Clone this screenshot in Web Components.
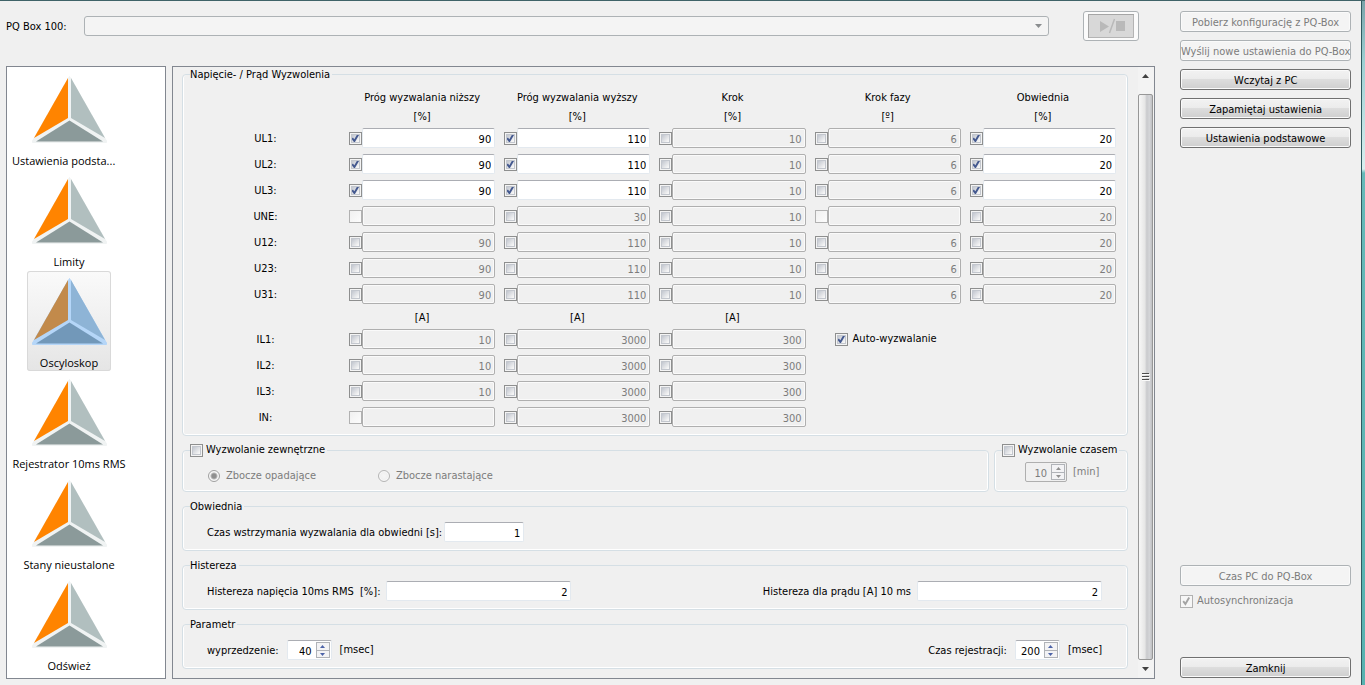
<!DOCTYPE html>
<html lang="pl">
<head>
<meta charset="utf-8">
<title>PQ Box 100</title>
<style>
  body { margin: 0; background: #f0f0f0; }
</style>
</head>
<body>
<pq-window>
  <pq-device-bar slot="top"></pq-device-bar>
  <pq-nav slot="nav"></pq-nav>
  <pq-scroll-view slot="view">
    <pq-group label="Napięcie- / Prąd Wyzwolenia" kind="grid"><pq-threshold-grid></pq-threshold-grid></pq-group>
    <pq-row>
      <pq-group label="Wyzwolanie zewnętrzne" kind="line" checkable class="grow"><pq-edge-choice></pq-edge-choice></pq-group>
      <pq-group label="Wyzwolanie czasem" kind="timer" checkable><pq-spin value="10" unit="[min]" compact disabled></pq-spin></pq-group>
    </pq-row>
    <pq-group label="Obwiednia" kind="form">
      <pq-field value="1" size="short">Czas wstrzymania wyzwalania dla obwiedni [s]:</pq-field>
    </pq-group>
    <pq-group label="Histereza" kind="form">
      <pq-field value="2">Histereza napięcia 10ms RMS &nbsp;[%]:</pq-field>
      <pq-field value="2">Histereza dla prądu [A] 10 ms</pq-field>
    </pq-group>
    <pq-group label="Parametr" kind="form">
      <pq-spin value="40" unit="[msec]">wyprzedzenie:</pq-spin>
      <pq-spin value="200" unit="[msec]">Czas rejestracji:</pq-spin>
    </pq-group>
  </pq-scroll-view>
  <pq-actions slot="side"></pq-actions>
</pq-window>

<script>
const svgUrl = s => `url("data:image/svg+xml,${encodeURIComponent(s)}")`;
const tick = c => svgUrl(`<svg xmlns="http://www.w3.org/2000/svg" width="11" height="11" viewBox="0 0 11 11"><path d="M2.2 5.2 4.4 8 8.2 1.6" fill="none" stroke="${c}" stroke-width="1.9"/></svg>`);
const comboArrow = svgUrl('<svg xmlns="http://www.w3.org/2000/svg" width="7" height="4" viewBox="0 0 7 4"><path d="M0 0h7L3.5 4z" fill="#8a8d8f"/></svg>');

const base = `
  :host { display: block; }
  * { box-sizing: border-box; }
  input, button, select { font: inherit; color: inherit; margin: 0; }
  :disabled, .off { color: #7c7c7c; }
  input[type=text] {
    appearance: none; height: 20px; min-width: 0; padding: 2px 3px 0; text-align: right;
    border: 1px solid #e3e9ef; border-top-color: #abadb3; border-radius: 2px; background: #fff; outline: 0;
  }
  input[type=text]:disabled { border-color: #afafaf; background: #f0f0f0; box-shadow: inset 0 0 0 1px #fafafa; }
  input[type=checkbox] {
    appearance: none; flex: none; width: 13px; height: 13px; border: 1px solid #8e8f8f;
    background: linear-gradient(135deg, #b9bec8, #f6f6f6 80%) content-box, #f6f6f6;
    padding: 1px; box-shadow: inset 0 0 0 1px #f4f4f4, inset 0 0 0 2px #c3c7ce;
  }
  input[type=checkbox]:checked {
    background: ${tick('#44598f')} center / 11px no-repeat border-box, linear-gradient(135deg, #b9bec8, #f6f6f6 80%) content-box, #f6f6f6;
  }
  input[type=checkbox]:disabled { border-color: #b1b1b1; background: linear-gradient(135deg, #f0f0f0, #fcfcfc); box-shadow: none; }
  input[type=checkbox]:disabled:checked { background: ${tick('#a3a3a3')} center / 11px no-repeat border-box, #f6f6f6; }
`;

function define(name, css, html) {
  customElements.define(name, class extends HTMLElement {
    constructor() {
      super();
      const t = document.createElement('template');
      t.innerHTML = `<style>${base}${css}</style>` + (typeof html === 'function' ? html(this) : html);
      this.attachShadow({ mode: 'open' }).append(t.content.cloneNode(true));
    }
  });
}

define('pq-window', `
  :host {
    display: grid; grid-template-columns: 160px minmax(0, 1fr) 171px; grid-template-rows: auto 1fr; column-gap: 6px;
    min-height: 100vh; padding: 10px 14px 6px 6px; box-sizing: border-box; position: relative;
    border-top: 1px solid #3f6368; background: #f0f0f0; color: #000;
    font: 11px/14px "DejaVu Sans Condensed", Tahoma, sans-serif;
  }
  .edge {
    position: absolute; top: 0; right: 0; bottom: 0; width: 4px; border-left: 1px solid #2f5a60;
    background: linear-gradient(#7aa3a9, #9ccfd2 60px, #d9efef 168px, #66b9b8 172px, #57b2b0);
  }
  .top { grid-column: 1 / 3; height: 55px; }
  .side { grid-column: 3; grid-row: 1 / 3; display: grid; }
  .view { margin-right: 19px; display: grid; }
  .nav { display: grid; }
`, `
  <header class="top"><slot name="top"></slot></header>
  <nav class="nav"><slot name="nav"></slot></nav>
  <main class="view"><slot name="view"></slot></main>
  <aside class="side"><slot name="side"></slot></aside>
  <div class="edge"></div>
`);

define('pq-device-bar', `
  :host { display: flex; align-items: center; height: 30px; padding-right: 35px; }
  label { width: 78px; padding-top: 2px; }
  select {
    appearance: none; flex: 1; height: 20px; border: 1px solid #adb2b5; border-radius: 3px; opacity: 1;
    background: ${comboArrow} right 6px center no-repeat, #f4f4f4; margin-right: 34px;
  }
  button {
    width: 56px; height: 30px; padding: 2px 4px; border: 1px solid #adb2b5; border-radius: 3px; background: #fbfbfb;
  }
  svg { display: block; }
`, `
  <label for="device">PQ Box 100:</label>
  <select id="device" disabled><option></option></select>
  <button disabled aria-label="Start / Stop">
    <svg width="46" height="24" viewBox="0 0 46 24">
      <path d="M0 0h46v24H0z" fill="#d8d8d8"/>
      <path d="M0 24V0h46" fill="none" stroke="#a5a5a5" stroke-width="2"/>
      <path d="M45.500 1v22.500H1" fill="none" stroke="#b4b4b4"/>
      <path d="M12 7l9 5.500-9 5.500zM28 7h9v10h-9z" fill="#b9b9b9"/>
      <path d="M26.500 5 21.500 19" stroke="#b9b9b9" stroke-width="1.500"/>
    </svg>
  </button>
`);

const logo = (l, r, b, edge) => `
  <svg width="84" height="84" viewBox="0 0 84 84" aria-hidden="true">
    <path d="M42.500 7.500 79.500 72v1.500h-74V72z" fill="${edge}" stroke="${edge}" stroke-linejoin="round"/>
    <path d="M41 9v40L7 69z" fill="${l}"/><path d="M44 9v40l34 20z" fill="${r}"/><path d="M42.500 51.500 76 72.500H9z" fill="${b}"/>
  </svg>`;
const plainLogo = logo('#ff8400', '#b1bfbf', '#8b9a9a', '#f0f3f3');
const selectedLogo = logo('#c28a4b', '#8eb4d6', '#7298b9', '#b5d6f8');

define('pq-nav', `
  :host { padding: 2px 34px 0 0; border: 1px solid #828790; background: #fff; font: 11px/16px "Open Sans", "Noto Sans", sans-serif; }
  ul { display: flex; flex-direction: column; align-items: center; gap: 1px; margin: 0; padding: 0; list-style: none; }
  button {
    display: flex; flex-direction: column; align-items: center; min-width: 84px; height: 100px; padding: 0;
    border: 0; border-radius: 3px; background: none; white-space: nowrap;
  }
  svg { display: block; }
  .on { background: linear-gradient(#fafafa, #e5e5e5); box-shadow: inset 0 0 0 1px #d9d9d9; }
  .wide { width: 114px; text-align: left; }
`, `
  <ul>
    <li><button>${plainLogo}<span class="wide">Ustawienia podsta...</span></button></li>
    <li><button>${plainLogo}<span>Limity</span></button></li>
    <li><button class="on" aria-current="page">${selectedLogo}<span>Oscyloskop</span></button></li>
    <li><button>${plainLogo}<span>Rejestrator 10ms RMS</span></button></li>
    <li><button>${plainLogo}<span>Stany nieustalone</span></button></li>
    <li><button>${plainLogo}<span>Odśwież</span></button></li>
  </ul>
`);

define('pq-scroll-view', `
  :host { display: flex; border: 1px solid #828790; }
  .content { flex: 1; min-width: 0; display: flex; flex-direction: column; gap: 7px; padding: 0 10px 9px 9px; }
  .bar { width: 16px; padding-right: 1px; display: flex; flex-direction: column; background: #f3f3f3; }
  .bar button { height: 18px; padding: 0; border: 0; background: none; display: grid; place-items: center; }
  .thumb {
    flex: 1; margin-top: 9px; border: 1px solid #979797; border-radius: 2px; display: grid; place-items: center;
    background: linear-gradient(90deg, #f7f7f7, #e6e6e6 45%, #c9cacd 60%, #d4d5d8 80%, #bfc0c3);
  }
`, `
  <div class="content"><slot></slot></div>
  <div class="bar">
    <button aria-label="W górę"><svg width="7" height="4" viewBox="0 0 7 4"><path d="M0 4h7L3.500 0z" fill="#404040"/></svg></button>
    <div class="thumb"><svg width="8" height="9" viewBox="0 0 8 9"><path d="M0 .5h7M0 3.500h7M0 6.500h7" stroke="#4c4c4c"/><path d="M0 1.500h8M0 4.500h8M0 7.500h8" stroke="#fafafa"/></svg></div>
    <button aria-label="W dół"><svg width="7" height="4" viewBox="0 0 7 4"><path d="M0 0h7L3.500 4z" fill="#404040"/></svg></button>
  </div>
`);

define('pq-row', `
  :host { display: flex; gap: 5px; }
  ::slotted(.grow) { flex: 1; }
`, `<slot></slot>`);

define('pq-group', `
  fieldset {
    min-width: 0; margin: 0; padding: 9px 8px 8px; border: 1px solid #d5dfe5; border-radius: 4px;
    box-shadow: inset 1px 0 #fff, inset -1px 0 #fff, inset 0 -1px #fff;
  }
  legend { height: 14px; padding: 0 2px 0 0; margin-left: -1px; line-height: 16px; white-space: nowrap; }
  legend label { display: flex; height: 14px; align-items: center; gap: 3px; }
  .body { display: flex; justify-content: space-between; align-items: center; }
  :host([kind=grid]) .body { display: block; padding-right: 3px; }
  :host([kind=form]) .body { padding: 0 17px 0 16px; }
  :host([kind=line]) fieldset { padding: 8px 8px 4px; }
  :host([kind=timer]) fieldset { width: 134px; padding: 5px 8px 9px; }
  :host([kind=timer]) .body { padding-left: 22px; }
`, el => `
  <fieldset>
    <legend>${el.hasAttribute('checkable')
      ? `<label><input type="checkbox"><span>${el.getAttribute('label')}</span></label>`
      : el.getAttribute('label')}</legend>
    <div class="body"><slot></slot></div>
  </fieldset>
`);

const columns = ['Próg wyzwalania niższy', 'Próg wyzwalania wyższy', 'Krok', 'Krok fazy', 'Obwiednia'];
const X = 'missing';
const voltage = [
  ['UL1', 90, 110, 10, 6, 20], ['UL2', 90, 110, 10, 6, 20], ['UL3', 90, 110, 10, 6, 20],
  ['UNE', X, 30, 10, X, 20],
  ['U12', 90, 110, 10, 6, 20], ['U23', 90, 110, 10, 6, 20], ['U31', 90, 110, 10, 6, 20],
];
const current = [['IL1', 10, 3000, 300], ['IL2', 10, 3000, 300], ['IL3', 10, 3000, 300], ['IN', X, 3000, 300]];
const enabled = (name, i) => name.startsWith('UL') && [0, 1, 4].includes(i);

const cell = (name, value, i) => `
  <div class="cell">
    <input type="checkbox" aria-label="${name} ${columns[i]}" ${value === X ? 'disabled' : ''} ${enabled(name, i) ? 'checked' : ''}>
    <input type="text" id="${name}-${i}" aria-label="${name} ${columns[i]}" value="${value === X ? '' : value}" ${enabled(name, i) ? '' : 'disabled'}>
  </div>`;
const row = ([name, ...values]) => `<label class="name" for="${name}-0">${name}:</label>` + values.map((v, i) => cell(name, v, i)).join('');

define('pq-threshold-grid', `
  :host { display: grid; grid-template-columns: 149px repeat(5, minmax(0, 1fr)); gap: 6px 9px; align-items: center; text-align: center; }
  .head { height: 13px; line-height: 15px; white-space: nowrap; }
  .cell { display: flex; align-items: center; }
  .cell input[type=text] { flex: 1; }
  .first { grid-column: 2; }
  .name { grid-column: 1; padding-top: 2px; }
  .auto { display: flex; align-items: center; gap: 5px; padding-left: 20px; text-align: left; }
`, `
  ${columns.map((c, i) => `<div class="head ${i ? '' : 'first'}">${c}</div>`).join('')}
  ${['%', '%', '%', 'º', '%'].map((u, i) => `<div class="head ${i ? '' : 'first'}">[${u}]</div>`).join('')}
  ${voltage.map(row).join('')}
  ${['A', 'A', 'A'].map((u, i) => `<div class="head ${i ? '' : 'first'}">[${u}]</div>`).join('')}
  ${current.map((r, i) => row(r) + (i ? '' : '<label class="auto"><input type="checkbox" checked>Auto-wyzwalanie</label>')).join('')}
`);

define('pq-edge-choice', `
  :host { display: grid; grid-template-columns: 170px auto; padding: 4px 17px; }
  label { display: flex; align-items: center; gap: 6px; height: 14px; }
  input[type=radio] {
    appearance: none; width: 12px; height: 12px; border: 1px solid #b5b5b5; border-radius: 50%;
    background: radial-gradient(#f6f6f6, #ececec); box-shadow: inset 0 0 0 1px #f8f8f8;
  }
  input:checked { background: radial-gradient(#8f8f8f 2px, #b8b8b8 3px, #f4f4f4 4px); border-color: #a0a0a0; }
`, `
  <label class="off"><input type="radio" name="edge" checked disabled>Zbocze opadające</label>
  <label class="off"><input type="radio" name="edge" disabled>Zbocze narastające</label>
`);

define('pq-field', `
  :host { display: flex; }
  label { display: flex; align-items: center; gap: 6px; white-space: nowrap; }
  span { padding-top: 2px; }
  input { width: 185px; }
  :host([size=short]) label { gap: 2px; }
  :host([size=short]) input { width: 80px; }
`, el => `<label><span><slot></slot></span><input type="text" value="${el.getAttribute('value')}"></label>`);

define('pq-spin', `
  :host { display: flex; align-items: center; gap: 8px; white-space: nowrap; }
  .box {
    display: flex; align-items: center; width: 45px; height: 20px; padding-right: 1px; background: #fff;
    border: 1px solid #e3e9ef; border-top-color: #abadb3; border-radius: 2px;
  }
  .box input[type=text] { flex: 1; height: 18px; border: 0; background: none; box-shadow: none; padding: 2px 4px 0 0; }
  .steps { display: grid; width: 14px; height: 16px; border: 1px solid #b0b3b8; grid-template-rows: 1fr 1fr; background: #f3f3f5; }
  .steps button { display: grid; place-items: center; padding: 0; border: 0; background: none; min-height: 0; }
  .steps button + button { border-top: 1px solid #b0b3b8; }
  label { padding-top: 2px; }
  svg { fill: #4c63a8; display: block; }
  :host([compact]) { gap: 6px; }
  :host([compact]) .box { width: 42px; }
  :host([disabled]) .box { border-color: #afafaf; background: #f0f0f0; }
  :host([disabled]) svg { fill: #909090; }
`, el => {
  const off = el.hasAttribute('disabled') ? 'disabled' : '';
  const lead = el.hasAttribute('compact') ? '' : '<label for="n"><slot></slot></label>';
  return `${lead}
    <div class="box">
      <input type="text" id="n" size="1" inputmode="numeric" aria-label="${el.getAttribute('unit')}" value="${el.getAttribute('value')}" ${off}>
      <span class="steps">
        <button ${off} aria-label="+"><svg width="5" height="3" viewBox="0 0 5 3"><path d="M0 3h5L2.500 0z"/></svg></button>
        <button ${off} aria-label="−"><svg width="5" height="3" viewBox="0 0 5 3"><path d="M0 0h5L2.500 3z"/></svg></button>
      </span>
    </div>
    <span class="${off && 'off'}">${el.getAttribute('unit')}</span>`;
});

define('pq-actions', `
  :host { display: flex; flex-direction: column; gap: 8px; padding-bottom: 1px; }
  button {
    height: 21px; padding: 2px 0 0; border: 1px solid #707070; border-radius: 3px; white-space: nowrap;
    background: linear-gradient(#f2f2f2, #ebebeb 50%, #dddddd 50%, #cfcfcf); box-shadow: inset 0 0 0 1px #fafafa;
    display: flex; align-items: center; justify-content: center;
  }
  button:disabled { border-color: #adb2b5; background: #f4f4f4; }
  .sync { margin-top: auto; }
  label { display: flex; align-items: center; gap: 4px; height: 14px; margin-bottom: 41px; }
`, `
  <button disabled>Pobierz konfigurację z PQ-Box</button>
  <button disabled>Wyślij nowe ustawienia do PQ-Box</button>
  <button>Wczytaj z PC</button>
  <button>Zapamiętaj ustawienia</button>
  <button>Ustawienia podstawowe</button>
  <button class="sync" disabled>Czas PC do PQ-Box</button>
  <label class="off"><input type="checkbox" checked disabled>Autosynchronizacja</label>
  <button>Zamknij</button>
`);
</script>
</body>
</html>
